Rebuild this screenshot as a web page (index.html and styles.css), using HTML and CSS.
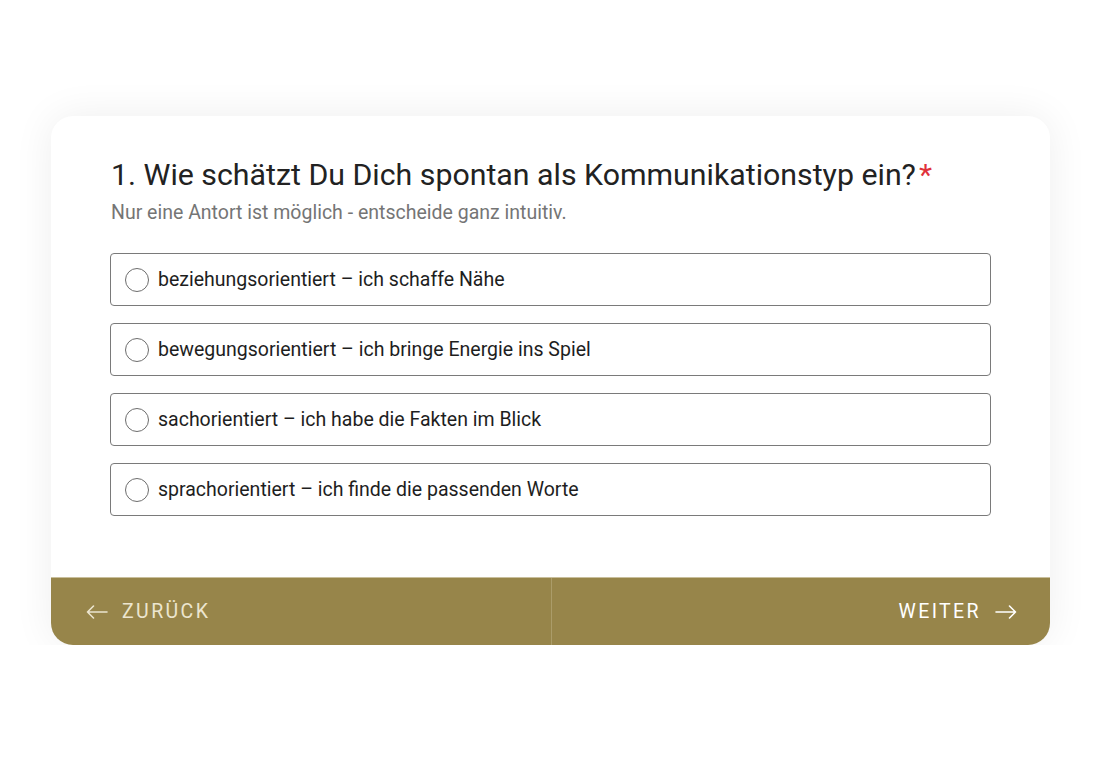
FILE: index.html
```html
<!DOCTYPE html>
<html lang="de">
<head>
<meta charset="utf-8">
<title>Kommunikationstyp</title>
<link rel="stylesheet" href="styles.css">
</head>
<body>
<main class="page">
  <section class="card">
    <div class="content">
      <h1 class="question">1. Wie schätzt Du Dich spontan als Kommunikationstyp ein?<span class="req">*</span></h1>
      <p class="hint">Nur eine Antort ist möglich - entscheide ganz intuitiv.</p>
      <div class="options">
        <label class="option"><span class="radio"></span><span class="label">beziehungsorientiert – ich schaffe Nähe</span></label>
        <label class="option"><span class="radio"></span><span class="label">bewegungsorientiert – ich bringe Energie ins Spiel</span></label>
        <label class="option"><span class="radio"></span><span class="label">sachorientiert – ich habe die Fakten im Blick</span></label>
        <label class="option"><span class="radio"></span><span class="label">sprachorientiert – ich finde die passenden Worte</span></label>
      </div>
    </div>
    <footer class="nav">
      <button class="nav-btn back">
        <svg class="arrow" width="22" height="14" viewBox="0 0 22 14" fill="none" stroke="currentColor" stroke-width="1.6" stroke-linecap="round" stroke-linejoin="round"><path d="M21 7H1.5M7.5 1L1.5 7l6 6"/></svg>
        <span>ZURÜCK</span>
      </button>
      <button class="nav-btn next">
        <span>WEITER</span>
        <svg class="arrow" width="22" height="14" viewBox="0 0 22 14" fill="none" stroke="currentColor" stroke-width="1.6" stroke-linecap="round" stroke-linejoin="round"><path d="M1 7h19.5M14.5 1l6 6-6 6"/></svg>
      </button>
    </footer>
  </section>
</main>
</body>
</html>
```

FILE: styles.css
```css
* { box-sizing: border-box; }
html, body { margin: 0; padding: 0; background: #ffffff; }
body { font-family: Roboto, "Liberation Sans", sans-serif; color: #222; }

.page {
  padding: 116px 0 0 51px;
}

.card {
  width: 999px;
  height: 529px;
  background: #fff;
  border-radius: 22px;
  box-shadow: 0 0 40px rgba(0, 0, 0, 0.07);
  overflow: hidden;
  display: flex;
  flex-direction: column;
}

.content {
  flex: 1;
  padding: 41px 59px 0 59px;
}

.question {
  margin: 0 0 0 1px;
  font-size: 30.3px;
  line-height: 36px;
  font-weight: 400;
  color: #222;
}
.req { color: #e0313a; margin-left: 3px; }

.hint {
  margin: 8px 0 0 1px;
  font-size: 19.5px;
  line-height: 24px;
  color: #757575;
}

.options {
  margin-top: 28px;
  display: flex;
  flex-direction: column;
  gap: 17px;
}

.option {
  height: 53px;
  border: 1px solid #7a7a7a;
  border-radius: 4px;
  display: flex;
  align-items: center;
  padding-left: 14px;
  gap: 9px;
}

.radio {
  width: 24px;
  height: 24px;
  border: 1px solid #6d6d6d;
  border-radius: 50%;
  flex: none;
}

.label {
  font-size: 19.5px;
  color: #1e1e1e;
}

.nav {
  height: 68px;
  background: #97854a;
  border-top: 1px solid #c9bf9c;
  display: flex;
}

.nav-btn {
  flex: 1;
  background: none;
  border: 0;
  display: flex;
  align-items: center;
  gap: 14px;
  font-family: Roboto, "Liberation Sans", sans-serif;
  font-size: 19.5px;
  letter-spacing: 2.4px;
  color: #f4efe0;
  padding: 0;
}
.back {
  padding-left: 35px;
  border-right: 1px solid #ab9c69;
  color: #ece5cf;
}
.next {
  justify-content: flex-end;
  padding-right: 33px;
  color: #ffffff;
  font-weight: 400;
}
.arrow { flex: none; }
```
